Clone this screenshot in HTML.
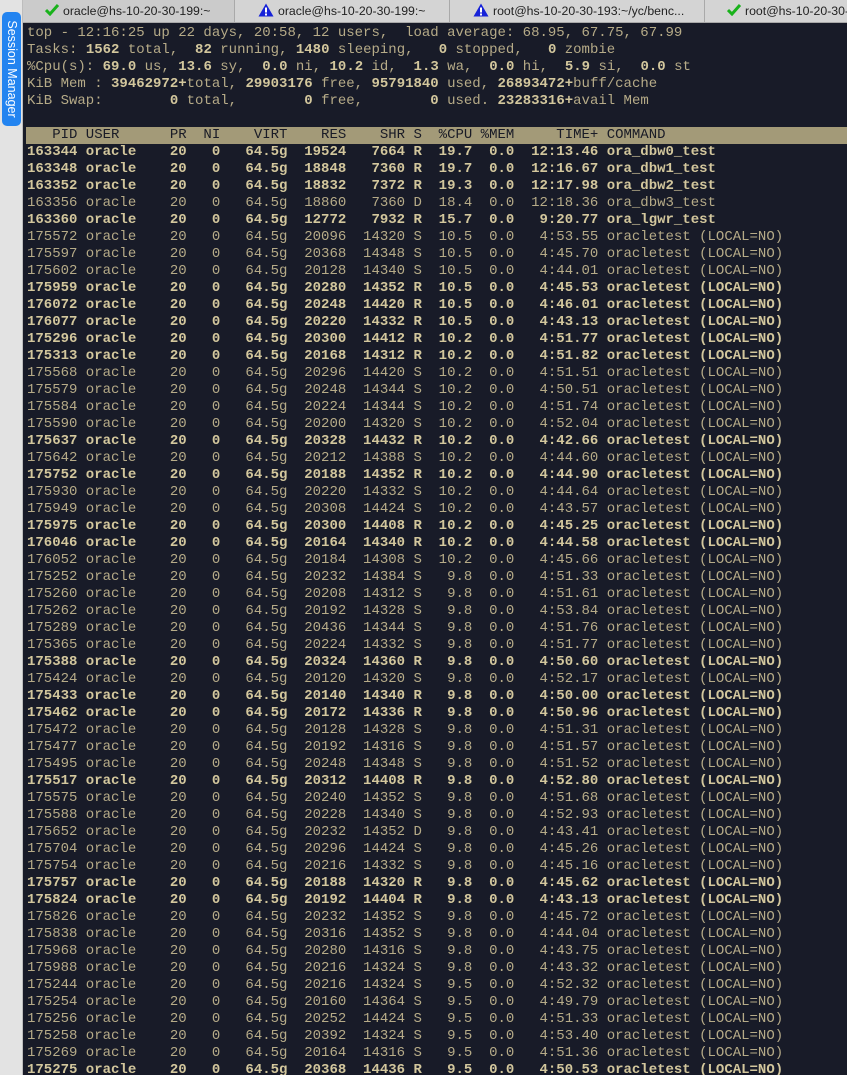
<!DOCTYPE html>
<html><head><meta charset="utf-8">
<style>
html,body{margin:0;padding:0;width:847px;height:1075px;overflow:hidden;background:#181b28;}
#side{position:absolute;left:0;top:0;width:23px;height:1075px;background:#e3e3e3;border-right:1px solid #bdbdbd;box-sizing:border-box;}
#pill{position:absolute;left:2px;top:12px;width:19px;height:114px;background:#2384f0;border-radius:5px;}
#pill span{position:absolute;left:50%;top:50%;transform:translate(-50%,-50%) rotate(90deg);white-space:nowrap;color:#fff;font:12.5px "Liberation Sans",sans-serif;}
#tabs{position:absolute;left:23px;top:0;right:0;height:23px;background:#d4d4d4;border-bottom:1px solid #a8a8a8;box-sizing:border-box;overflow:hidden;}
.tab{position:absolute;top:0;height:22px;border-right:1px solid #a9a9a9;box-sizing:border-box;font:12.3px "Liberation Sans",sans-serif;color:#222;line-height:23px;white-space:nowrap;overflow:hidden;}
.tab .ic{display:inline-block;vertical-align:middle;margin-right:4px;margin-top:-3px}
#term{position:absolute;left:23px;top:23px;width:824px;bottom:0;background:#181b28;overflow:hidden;}
pre{margin:0;padding:2px 0 0 4px;font:14px/17px "Liberation Mono",monospace;color:#b6ab88;white-space:pre;}
pre b{color:#d3c79d;font-weight:bold}
.hd{background:#a39a78;color:#191b26;margin-left:-1px;padding-left:1px;display:block}
</style></head><body>
<div id="side"><div id="pill"><span>Session Manager</span></div></div>
<div id="tabs">
 <div class="tab" style="left:0;width:212px;background:#cbcbcb;padding-left:22px"><svg class="ic" width="14" height="12" viewBox="0 0 14 12"><path d="M1 6 L5 10 L13 1" stroke="#19b21b" stroke-width="3" fill="none"/></svg>oracle@hs-10-20-30-199:~</div>
 <div class="tab" style="left:212px;width:215px;padding-left:23px"><svg class="ic" width="16" height="14" viewBox="0 0 16 14"><path d="M8 0.5 L15.5 13.5 L0.5 13.5 Z" fill="#1622d8"/><rect x="7" y="4.5" width="2" height="5" fill="#fff"/><rect x="7" y="10.5" width="2" height="2" fill="#fff"/></svg>oracle@hs-10-20-30-199:~</div>
 <div class="tab" style="left:427px;width:255px;padding-left:23px"><svg class="ic" width="16" height="14" viewBox="0 0 16 14"><path d="M8 0.5 L15.5 13.5 L0.5 13.5 Z" fill="#1622d8"/><rect x="7" y="4.5" width="2" height="5" fill="#fff"/><rect x="7" y="10.5" width="2" height="2" fill="#fff"/></svg>root@hs-10-20-30-193:~/yc/benc...</div>
 <div class="tab" style="left:682px;width:160px;padding-left:22px;border-right:none"><svg class="ic" width="14" height="12" viewBox="0 0 14 12"><path d="M1 6 L5 10 L13 1" stroke="#19b21b" stroke-width="3" fill="none"/></svg>root@hs-10-20-30-193:~</div>
</div>
<div id="term"><pre>top - 12:16:25 up 22 days, 20:58, 12 users,  load average: 68.95, 67.75, 67.99
Tasks: <b>1562</b> total,  <b>82</b> running, <b>1480</b> sleeping,   <b>0</b> stopped,   <b>0</b> zombie
%Cpu(s): <b>69.0</b> us, <b>13.6</b> sy,  <b>0.0</b> ni, <b>10.2</b> id,  <b>1.3</b> wa,  <b>0.0</b> hi,  <b>5.9</b> si,  <b>0.0</b> st
KiB Mem : <b>39462972+</b>total, <b>29903176</b> free, <b>95791840</b> used, <b>26893472+</b>buff/cache
KiB Swap:        <b>0</b> total,        <b>0</b> free,        <b>0</b> used. <b>23283316+</b>avail Mem

<span class="hd">   PID USER      PR  NI    VIRT    RES    SHR S  %CPU %MEM     TIME+ COMMAND                    </span><b>163344 oracle    20   0   64.5g  19524   7664 R  19.7  0.0  12:13.46 ora_dbw0_test</b>
<b>163348 oracle    20   0   64.5g  18848   7360 R  19.7  0.0  12:16.67 ora_dbw1_test</b>
<b>163352 oracle    20   0   64.5g  18832   7372 R  19.3  0.0  12:17.98 ora_dbw2_test</b>
163356 oracle    20   0   64.5g  18860   7360 D  18.4  0.0  12:18.36 ora_dbw3_test
<b>163360 oracle    20   0   64.5g  12772   7932 R  15.7  0.0   9:20.77 ora_lgwr_test</b>
175572 oracle    20   0   64.5g  20096  14320 S  10.5  0.0   4:53.55 oracletest (LOCAL=NO)
175597 oracle    20   0   64.5g  20368  14348 S  10.5  0.0   4:45.70 oracletest (LOCAL=NO)
175602 oracle    20   0   64.5g  20128  14340 S  10.5  0.0   4:44.01 oracletest (LOCAL=NO)
<b>175959 oracle    20   0   64.5g  20280  14352 R  10.5  0.0   4:45.53 oracletest (LOCAL=NO)</b>
<b>176072 oracle    20   0   64.5g  20248  14420 R  10.5  0.0   4:46.01 oracletest (LOCAL=NO)</b>
<b>176077 oracle    20   0   64.5g  20220  14332 R  10.5  0.0   4:43.13 oracletest (LOCAL=NO)</b>
<b>175296 oracle    20   0   64.5g  20300  14412 R  10.2  0.0   4:51.77 oracletest (LOCAL=NO)</b>
<b>175313 oracle    20   0   64.5g  20168  14312 R  10.2  0.0   4:51.82 oracletest (LOCAL=NO)</b>
175568 oracle    20   0   64.5g  20296  14420 S  10.2  0.0   4:51.51 oracletest (LOCAL=NO)
175579 oracle    20   0   64.5g  20248  14344 S  10.2  0.0   4:50.51 oracletest (LOCAL=NO)
175584 oracle    20   0   64.5g  20224  14344 S  10.2  0.0   4:51.74 oracletest (LOCAL=NO)
175590 oracle    20   0   64.5g  20200  14320 S  10.2  0.0   4:52.04 oracletest (LOCAL=NO)
<b>175637 oracle    20   0   64.5g  20328  14432 R  10.2  0.0   4:42.66 oracletest (LOCAL=NO)</b>
175642 oracle    20   0   64.5g  20212  14388 S  10.2  0.0   4:44.60 oracletest (LOCAL=NO)
<b>175752 oracle    20   0   64.5g  20188  14352 R  10.2  0.0   4:44.90 oracletest (LOCAL=NO)</b>
175930 oracle    20   0   64.5g  20220  14332 S  10.2  0.0   4:44.64 oracletest (LOCAL=NO)
175949 oracle    20   0   64.5g  20308  14424 S  10.2  0.0   4:43.57 oracletest (LOCAL=NO)
<b>175975 oracle    20   0   64.5g  20300  14408 R  10.2  0.0   4:45.25 oracletest (LOCAL=NO)</b>
<b>176046 oracle    20   0   64.5g  20164  14340 R  10.2  0.0   4:44.58 oracletest (LOCAL=NO)</b>
176052 oracle    20   0   64.5g  20184  14308 S  10.2  0.0   4:45.66 oracletest (LOCAL=NO)
175252 oracle    20   0   64.5g  20232  14384 S   9.8  0.0   4:51.33 oracletest (LOCAL=NO)
175260 oracle    20   0   64.5g  20208  14312 S   9.8  0.0   4:51.61 oracletest (LOCAL=NO)
175262 oracle    20   0   64.5g  20192  14328 S   9.8  0.0   4:53.84 oracletest (LOCAL=NO)
175289 oracle    20   0   64.5g  20436  14344 S   9.8  0.0   4:51.76 oracletest (LOCAL=NO)
175365 oracle    20   0   64.5g  20224  14332 S   9.8  0.0   4:51.77 oracletest (LOCAL=NO)
<b>175388 oracle    20   0   64.5g  20324  14360 R   9.8  0.0   4:50.60 oracletest (LOCAL=NO)</b>
175424 oracle    20   0   64.5g  20120  14320 S   9.8  0.0   4:52.17 oracletest (LOCAL=NO)
<b>175433 oracle    20   0   64.5g  20140  14340 R   9.8  0.0   4:50.00 oracletest (LOCAL=NO)</b>
<b>175462 oracle    20   0   64.5g  20172  14336 R   9.8  0.0   4:50.96 oracletest (LOCAL=NO)</b>
175472 oracle    20   0   64.5g  20128  14328 S   9.8  0.0   4:51.31 oracletest (LOCAL=NO)
175477 oracle    20   0   64.5g  20192  14316 S   9.8  0.0   4:51.57 oracletest (LOCAL=NO)
175495 oracle    20   0   64.5g  20248  14348 S   9.8  0.0   4:51.52 oracletest (LOCAL=NO)
<b>175517 oracle    20   0   64.5g  20312  14408 R   9.8  0.0   4:52.80 oracletest (LOCAL=NO)</b>
175575 oracle    20   0   64.5g  20240  14352 S   9.8  0.0   4:51.68 oracletest (LOCAL=NO)
175588 oracle    20   0   64.5g  20228  14340 S   9.8  0.0   4:52.93 oracletest (LOCAL=NO)
175652 oracle    20   0   64.5g  20232  14352 D   9.8  0.0   4:43.41 oracletest (LOCAL=NO)
175704 oracle    20   0   64.5g  20296  14424 S   9.8  0.0   4:45.26 oracletest (LOCAL=NO)
175754 oracle    20   0   64.5g  20216  14332 S   9.8  0.0   4:45.16 oracletest (LOCAL=NO)
<b>175757 oracle    20   0   64.5g  20188  14320 R   9.8  0.0   4:45.62 oracletest (LOCAL=NO)</b>
<b>175824 oracle    20   0   64.5g  20192  14404 R   9.8  0.0   4:43.13 oracletest (LOCAL=NO)</b>
175826 oracle    20   0   64.5g  20232  14352 S   9.8  0.0   4:45.72 oracletest (LOCAL=NO)
175838 oracle    20   0   64.5g  20316  14352 S   9.8  0.0   4:44.04 oracletest (LOCAL=NO)
175968 oracle    20   0   64.5g  20280  14316 S   9.8  0.0   4:43.75 oracletest (LOCAL=NO)
175988 oracle    20   0   64.5g  20216  14324 S   9.8  0.0   4:43.32 oracletest (LOCAL=NO)
175244 oracle    20   0   64.5g  20216  14324 S   9.5  0.0   4:52.32 oracletest (LOCAL=NO)
175254 oracle    20   0   64.5g  20160  14364 S   9.5  0.0   4:49.79 oracletest (LOCAL=NO)
175256 oracle    20   0   64.5g  20252  14424 S   9.5  0.0   4:51.33 oracletest (LOCAL=NO)
175258 oracle    20   0   64.5g  20392  14324 S   9.5  0.0   4:53.40 oracletest (LOCAL=NO)
175269 oracle    20   0   64.5g  20164  14316 S   9.5  0.0   4:51.36 oracletest (LOCAL=NO)
<b>175275 oracle    20   0   64.5g  20368  14436 R   9.5  0.0   4:50.53 oracletest (LOCAL=NO)</b>
</pre></div>
</body></html>
